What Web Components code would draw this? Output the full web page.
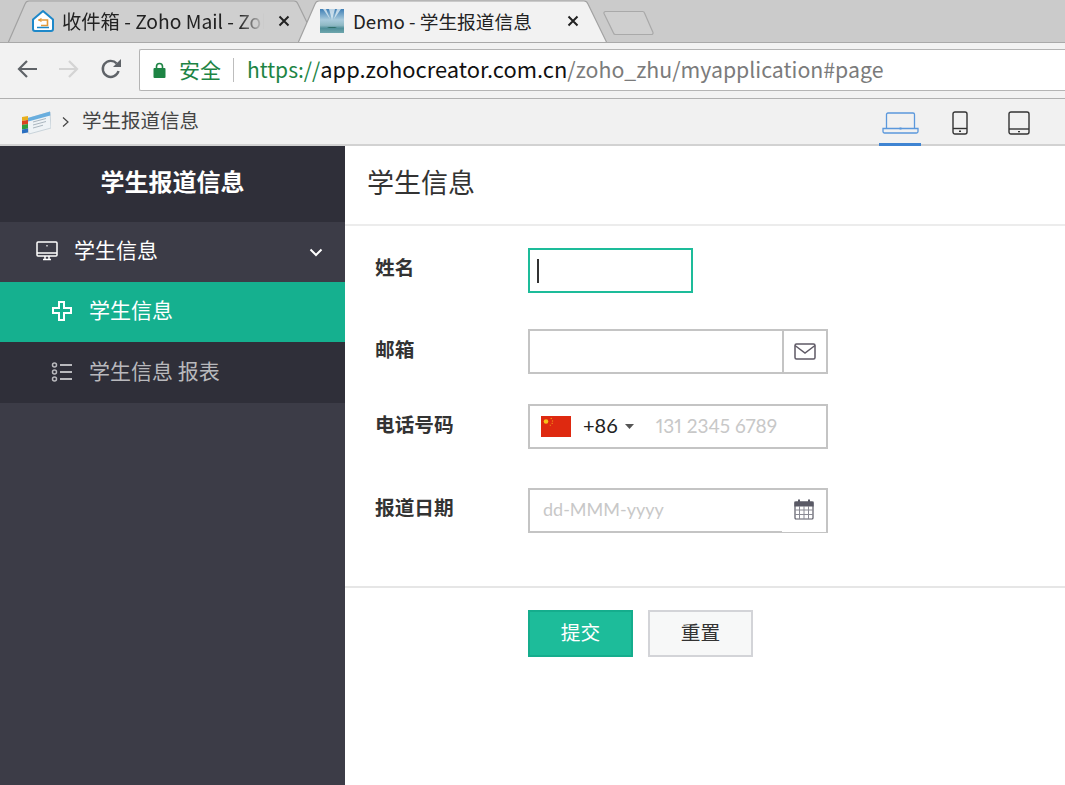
<!DOCTYPE html>
<html lang="zh">
<head>
<meta charset="utf-8">
<title>学生报道信息</title>
<style>
  html, body { margin: 0; height: 100%; overflow: hidden; background: #fff; }
  body { font-family: "Noto Sans CJK SC", "Noto Sans", sans-serif; color: #333; }
</style>
</head>
<body>

<chrome-tabs>
  <chrome-tab style="--w:309px;--after:-19px;--pad:23px;--gap:7px;--fs:19.300px;--lab:202px;--cl:14px" icon="mail">收件箱 - Zoho Mail - Zoho</chrome-tab>
  <chrome-tab style="--w:309px;--after:-4px;--pad:22px;--gap:9px;--fs:18.700px;--lab:180px;--cl:34px" icon="sky" active>Demo - 学生报道信息</chrome-tab>
</chrome-tabs>
<chrome-toolbar></chrome-toolbar>
<app-bar></app-bar>

<app-shell>
  <side-nav slot="side">
    <nav-item kind="group" icon="monitor">学生信息</nav-item>
    <nav-item kind="active" icon="plus">学生信息</nav-item>
    <nav-item kind="sub" icon="list">学生信息 报表</nav-item>
  </side-nav>
  <student-form slot="main"></student-form>
</app-shell>

<script>
const ICONS = {
  mail: `<svg width="24" height="24" viewBox="0 0 24 24"><path d="M2 10.500L12 2l10 8.500V20a2 2 0 0 1-2 2H4a2 2 0 0 1-2-2z" fill="#fff" stroke="#1e88c9" stroke-width="2" stroke-linejoin="round"/><path d="M7.500 11h9v5.500H10" fill="none" stroke="#e39a3b" stroke-width="1.600"/><path d="M10.500 9.500L8 11l2.500 1.500" fill="none" stroke="#e39a3b" stroke-width="1.300"/><path d="M6 18.500h12" stroke="#1e88c9" stroke-width="1.500"/></svg>`,
  sky: `<svg width="24" height="24" viewBox="0 0 24 24"><defs><linearGradient id="s" x1="0" y1="0" x2="0" y2="1"><stop offset="0" stop-color="#3f7fb5"/><stop offset=".45" stop-color="#a9cbdc"/><stop offset=".68" stop-color="#8fb9c4"/><stop offset=".8" stop-color="#4f8f99"/><stop offset="1" stop-color="#6fa6ad"/></linearGradient></defs><rect width="24" height="24" fill="url(#s)"/><path d="M9 0l3 11 3-11zM3 0l7 10L6 0zM21 0l-7 10 3-10z" fill="#e6f0f5" opacity=".75"/><path d="M7 19h10l-2-1H9z" fill="#2f6f6a"/></svg>`,
  monitor: `<svg width="22" height="20" viewBox="0 0 22 20" fill="none" stroke="currentColor" stroke-width="1.500"><rect x="1" y="1" width="20" height="14" rx="1"/><path d="M1 12h20M7 18.500h8M9 15v3M13 15v3"/><path d="M11 4v1.500" stroke-width="1.200"/></svg>`,
  plus: `<svg width="22" height="22" viewBox="0 0 22 22" fill="none" stroke="currentColor" stroke-width="2"><path d="M8 2h5v6h7v5h-7v7H8v-7H2V8h6z"/></svg>`,
  list: `<svg width="22" height="20" viewBox="0 0 22 20" fill="none" stroke="currentColor" stroke-width="1.500"><circle cx="3.500" cy="3" r="2"/><circle cx="3.500" cy="10" r="2"/><circle cx="3.500" cy="17" r="2"/><path d="M9 3h12M9 10h12M9 17h12" stroke-width="2"/></svg>`
};

const define = (name, css, html) => {
  class El extends HTMLElement {
    connectedCallback() {
      const shadow = this.attachShadow({ mode: 'open' });
      shadow.innerHTML = `<style>${css}</style>` + (typeof html === 'function' ? html(this) : html);
    }
  }
  customElements.define(name, El);
};

define('chrome-tabs', `
  :host { display: flex; height: 43px; box-sizing: border-box; padding-left: 8px; background: #cbcbcb; border-bottom: 1px solid #a9a9a9; overflow: hidden; }
  .new { flex: none; margin-top: 10px; }
`, `<slot></slot><svg class="new" width="52" height="27" viewBox="0 0 52 27"><path d="M2.500 1.500h37a2 2 0 0 1 2 1.500l8.500 19.500a1.500 1.500 0 0 1-1.500 2H12.500a2 2 0 0 1-2-1.500L1 3.500a1.500 1.500 0 0 1 1.500-2z" fill="#cfcfcf" stroke="#a9a9a9" stroke-width="1.200"/></svg>`);

define('chrome-tab', `
  :host { display: block; position: relative; width: var(--w); height: 43px; flex: none; margin-right: var(--after); font-size: var(--fs); color: #222; }
  :host([active]) { z-index: 2; }
  svg.shape { position: absolute; left: 0; top: 0; }
  .body { position: relative; display: flex; align-items: center; height: 42px; padding-left: var(--pad); padding-top: 2px; box-sizing: border-box; }
  .ico { flex: none; width: 24px; height: 24px; margin-right: var(--gap); margin-top: -2px; }
  .label { flex: none; width: var(--lab); white-space: nowrap; overflow: hidden; padding-bottom: 3px; -webkit-mask-image: linear-gradient(90deg,#000 88%,transparent); mask-image: linear-gradient(90deg,#000 88%,transparent); }
  .close { flex: none; width: 12px; height: 12px; margin-left: var(--cl); margin-top: -2px; }
  :host([active]) .label { -webkit-mask-image: none; mask-image: none; }
`, (el) => {
  const w = 309;
  const fill = el.hasAttribute('active') ? '#f2f2f2' : '#cfcfcf';
  return `<svg class="shape" width="${w}" height="43" viewBox="0 0 ${w} 43">
      <path d="M0 43L17 4Q18 1 21 1H${w - 23}Q${w - 20} 1 ${w - 19} 4L${w} 43Z" fill="${fill}" stroke="#a2a2a2" stroke-width="1.200"/>
    </svg>
    <div class="body">
      <span class="ico">${ICONS[el.getAttribute('icon')]}</span>
      <span class="label"><slot></slot></span>
      <svg class="close" viewBox="0 0 12 12"><path d="M1.500 1.500l9 9M10.500 1.500l-9 9" stroke="#222" stroke-width="2"/></svg>
    </div>`;
});

define('chrome-toolbar', `
  :host { display: flex; align-items: center; height: 56px; box-sizing: border-box; background: #f2f2f2; border-bottom: 1px solid #b0b0b0; padding-left: 16px; overflow: hidden; }
  .nav { flex: none; display: flex; gap: 20px; width: 123px; align-items: center; margin-top: -3px; }
  .url { flex: none; display: flex; align-items: center; width: 960px; height: 42px; margin-top: -2px; box-sizing: border-box; background: #fff; border: 1px solid #b4b4b4; border-right: 0; border-radius: 2px 0 0 2px; font-size: 21px; white-space: nowrap; }
  .lock { margin-left: 13px; margin-right: 13px; }
  .sec { color: #1d8444; padding-bottom: 2px; }
  .sep { width: 1px; height: 24px; background: #bdbdbd; margin: 0 13px 0 12px; }
  .https { color: #1d8444; padding-bottom: 2px; }
  .host { color: #111; font-size: 21.900px; padding-bottom: 2px; }
  .path { color: #7b7b7b; font-size: 21.300px; padding-bottom: 2px; }
`, `<div class="nav">
    <svg width="22" height="22" viewBox="0 0 22 22" fill="none" stroke="#5f6368" stroke-width="2.200"><path d="M21 11H3M11 3l-8 8 8 8"/></svg>
    <svg width="22" height="22" viewBox="0 0 22 22" fill="none" stroke="#d4d4d4" stroke-width="2.200"><path d="M1 11h18M11 3l8 8-8 8"/></svg>
    <svg width="22" height="22" viewBox="0 0 22 22" fill="none"><path d="M18.500 13a8 8 0 1 1-1.800-7.500" stroke="#5f6368" stroke-width="2.400"/><path d="M21 1v8h-8z" fill="#5f6368"/></svg>
  </div>
  <div class="url">
    <svg class="lock" width="13" height="16" viewBox="0 0 13 16"><path d="M3.500 7V4.500a3 3 0 0 1 6 0V7" fill="none" stroke="#1d8444" stroke-width="1.600"/><rect x="0.500" y="6" width="12" height="10" rx="1" fill="#1d8444"/></svg>
    <span class="sec">安全</span><span class="sep"></span>
    <span class="https">https://</span><span class="host">app.zohocreator.com.cn</span><span class="path">/zoho_zhu/myapplication#page</span>
  </div>`);

define('app-bar', `
  :host { display: flex; align-items: center; height: 47px; box-sizing: border-box; background: #f1f1f1; border-bottom: 2px solid #d2d2d2; padding-left: 21px; font-size: 19.500px; color: #444; }
  .crumb { flex: 1; display: flex; align-items: center; }
  .crumb span { padding-bottom: 5px; }
  .gt { margin: 0 13px 0 11px; }
  .dev { display: flex; align-items: flex-start; margin-right: 25px; align-self: stretch; }
  .d { display: flex; align-items: center; justify-content: center; width: 42px; margin-bottom: -2px; box-sizing: border-box; height: 47px; padding-top: 3px; border-bottom: 3px solid transparent; }
  .d.on { border-bottom-color: #3f84d2; }
  .d:nth-child(2) { margin-left: 18px; }
  .d:nth-child(3) { margin-left: 17px; }
`, `<div class="crumb">
    <svg width="30" height="26" viewBox="0 0 30 26"><path d="M5 10l24-7 1 16-22 6z" fill="#eef3f6" stroke="#c9d3da"/><path d="M5 9.500L29 2.500l.3 4-24 6.500z" fill="#69aede"/><path d="M12 13l13-3.500M12 16l13-3.500M12 19l10-2.800" stroke="#aab6bf"/><path d="M1 8l6-1v4l-6 1z" fill="#e8b020"/><path d="M1 12l6-1v4l-6 1z" fill="#d9421f"/><path d="M1 16l6-1v4.500l-6 1z" fill="#2f9e3f"/><path d="M1 20.500l6-1v4l-6 1z" fill="#2a6fc0"/></svg>
    <svg class="gt" width="7" height="10" viewBox="0 0 7 10" fill="none" stroke="#444" stroke-width="1.200"><path d="M1 .5l5 4.500-5 4.500"/></svg>
    <span>学生报道信息</span>
  </div>
  <div class="dev">
    <div class="d on"><svg width="37" height="22" viewBox="0 0 37 22" fill="none" stroke="#5b98dc" stroke-width="1.300"><path d="M4.500 16V2.500A1.500 1.500 0 0 1 6 1h25a1.500 1.500 0 0 1 1.500 1.500V16"/><path d="M1 16.500h35v3a1.500 1.500 0 0 1-1.500 1.500h-32A1.500 1.500 0 0 1 1 19.500z"/><path d="M17.500 16.500h2" stroke-width="2"/></svg></div>
    <div class="d"><svg width="16" height="24" viewBox="0 0 16 24" fill="none" stroke="#333" stroke-width="1.400"><rect x="1" y="1" width="14" height="22" rx="2"/><path d="M1 17.500h14"/><rect x="7" y="19.500" width="2" height="1.500" fill="#333" stroke="none"/></svg></div>
    <div class="d"><svg width="22" height="24" viewBox="0 0 22 24" fill="none" stroke="#333" stroke-width="1.400"><rect x="1" y="1" width="20" height="22" rx="2"/><path d="M1 18h20"/><rect x="10" y="20" width="2" height="1.300" fill="#333" stroke="none"/></svg></div>
  </div>`);

define('app-shell', `
  :host { display: flex; height: 639px; }
  ::slotted([slot=side]) { flex: none; width: 345px; }
  ::slotted([slot=main]) { flex: 1; min-width: 0; }
`, `<slot name="side"></slot><slot name="main"></slot>`);

define('side-nav', `
  :host { display: block; background: #3c3c47; color: #fff; }
  .title { height: 76px; display: flex; align-items: center; justify-content: center; background: #2f2f39; font-size: 24px; font-weight: 700; padding-bottom: 7px; box-sizing: border-box; }
`, `<div class="title">学生报道信息</div><slot></slot>`);

define('nav-item', `
  :host { display: flex; align-items: center; height: 60px; font-size: 21px; box-sizing: border-box; }
  :host([kind=group]) { padding-left: 36px; color: #fff; background: #3c3c47; }
  :host([kind=active]) { padding-left: 51px; color: #fff; background: #15b08f; }
  :host([kind=sub]) { padding-left: 51px; color: #b9b9bd; background: #2f2f39; height: 61px; }
  .ico { display: flex; width: 22px; margin-right: 16px; padding-bottom: 2px; }
  .txt { padding-bottom: 6px; }
  .chev { margin-left: auto; margin-right: 22px; }
`, (el) => `<span class="ico">${ICONS[el.getAttribute('icon')]}</span><span class="txt"><slot></slot></span>` +
  (el.getAttribute('kind') === 'group' ? `<svg class="chev" width="14" height="9" viewBox="0 0 14 9" fill="none" stroke="#fff" stroke-width="2"><path d="M1.500 1.500l5.500 5.500 5.500-5.500"/></svg>` : ''));

define('form-row', `
  :host { display: flex; align-items: flex-start; }
  .lab { flex: none; width: 183px; padding-left: 30px; margin-top: var(--lab-top, 5px); box-sizing: border-box; font-size: 19.700px; font-weight: 700; color: #333; line-height: 28px; }
`, `<div class="lab"><slot name="label"></slot></div><slot></slot>`);

define('text-box', `
  :host { display: flex; align-items: center; width: 300px; height: 45px; box-sizing: border-box; border: 2px solid #c4c4c4; background: #fff; font-family: Lato, "Noto Sans", sans-serif; font-size: 18px; color: #c8c8c8; }
  :host([focus]) { width: 165px; border-color: #1dbc9a; }
  .caret { width: 2px; height: 24px; background: #333; margin-left: 7px; }
  .ph { padding: 0 0 3px 13px; flex: 1; }
  .addon { flex: none; display: flex; align-items: center; justify-content: center; box-sizing: border-box; width: 44px; height: 100%; }
  .addon.line { border-left: 2px solid #c4c4c4; }
  .addon.cal { align-self: flex-start; height: calc(100% + 1px); background: #fff; padding-bottom: 4px; }
`, (el) => {
  const t = el.getAttribute('type');
  if (t === 'name') return `<span class="caret"></span>`;
  if (t === 'mail') return `<span class="ph"></span><span class="addon line"><svg width="22" height="17" viewBox="0 0 22 17" fill="none" stroke="#5f5a66" stroke-width="1.500"><rect x="1" y="1" width="20" height="15" rx="1.500"/><path d="M1 2.500l10 7.500 10-7.500"/></svg></span>`;
  return `<span class="ph"><slot></slot></span><span class="addon cal"><svg width="20" height="21" viewBox="0 0 20 21" fill="none" stroke="#5a5a66" stroke-width="1.200"><rect x="1" y="3" width="18" height="17" rx="1"/><path d="M1 3h18v4H1z" fill="#5a5a66"/><path d="M1 11h18M1 15.500h18M5.500 7v13M10 7v13M14.500 7v13" stroke="#8a8a94" stroke-width="1"/><path d="M5 .5v4M15 .5v4" stroke-width="2"/></svg></span>`;
});

define('phone-box', `
  :host { display: flex; align-items: center; width: 300px; height: 45px; box-sizing: border-box; border: 2px solid #c4c4c4; background: #fff; font-family: Lato, "Noto Sans", sans-serif; }
  .flag { margin-left: 11px; margin-right: 12px; flex: none; }
  .cc { font-size: 20px; color: #222; padding-bottom: 3px; }
  .tri { margin-left: 7px; margin-right: 22px; flex: none; }
  .num { font-size: 19px; color: #c8c8c8; white-space: nowrap; font-variant-numeric: proportional-nums; padding-bottom: 2px; }
`, `<svg class="flag" width="30" height="21" viewBox="0 0 30 21"><rect width="30" height="21" fill="#de2910"/><circle cx="5" cy="5.500" r="2.300" fill="#f7c11a"/><path d="M10 2l.5 1M11.500 4.500v1M11.500 7l-.7.7M9.500 9l-.6.4" stroke="#f4a11a" stroke-width="1.200"/></svg>
  <span class="cc">+86</span>
  <svg class="tri" width="9" height="5" viewBox="0 0 9 5"><path d="M0 0h9L4.500 5z" fill="#555"/></svg>
  <span class="num">131 2345 6789</span>`);

define('form-btn', `
  :host { display: inline-flex; align-items: center; justify-content: center; width: 105px; height: 47px; box-sizing: border-box; font-size: 19.700px; border: 2px solid #d3d4d8; background: #f7f8f8; color: #333; padding-bottom: 5px; }
  :host([primary]) { border-color: #15ad8d; background: #1dbc9a; color: #fff; }
`, `<slot></slot>`);

define('student-form', `
  :host { display: block; background: #fff; height: 100%; }
  .head { display: flex; align-items: center; padding: 0 0 8px 22px; font-size: 27px; color: #333; border-bottom: 2px solid #ececec; box-sizing: border-box; height: 80px; }
  .fields { display: flex; flex-direction: column; padding-top: 22px; height: 362px; box-sizing: border-box; border-bottom: 2px solid #e6e6e6; }
  .actions { display: flex; gap: 15px; padding: 22px 0 0 183px; }
`, `<div class="head">学生信息</div>
  <div class="fields">
    <form-row style="margin-bottom:36px"><span slot="label">姓名</span><text-box type="name" focus></text-box></form-row>
    <form-row style="margin-bottom:30px;--lab-top:6px"><span slot="label">邮箱</span><text-box type="mail"></text-box></form-row>
    <form-row style="margin-bottom:39px;--lab-top:6px"><span slot="label">电话号码</span><phone-box></phone-box></form-row>
    <form-row><span slot="label">报道日期</span><text-box type="date">dd-MMM-yyyy</text-box></form-row>
  </div>
  <div class="actions"><form-btn primary>提交</form-btn><form-btn>重置</form-btn></div>`);
</script>
</body>
</html>
